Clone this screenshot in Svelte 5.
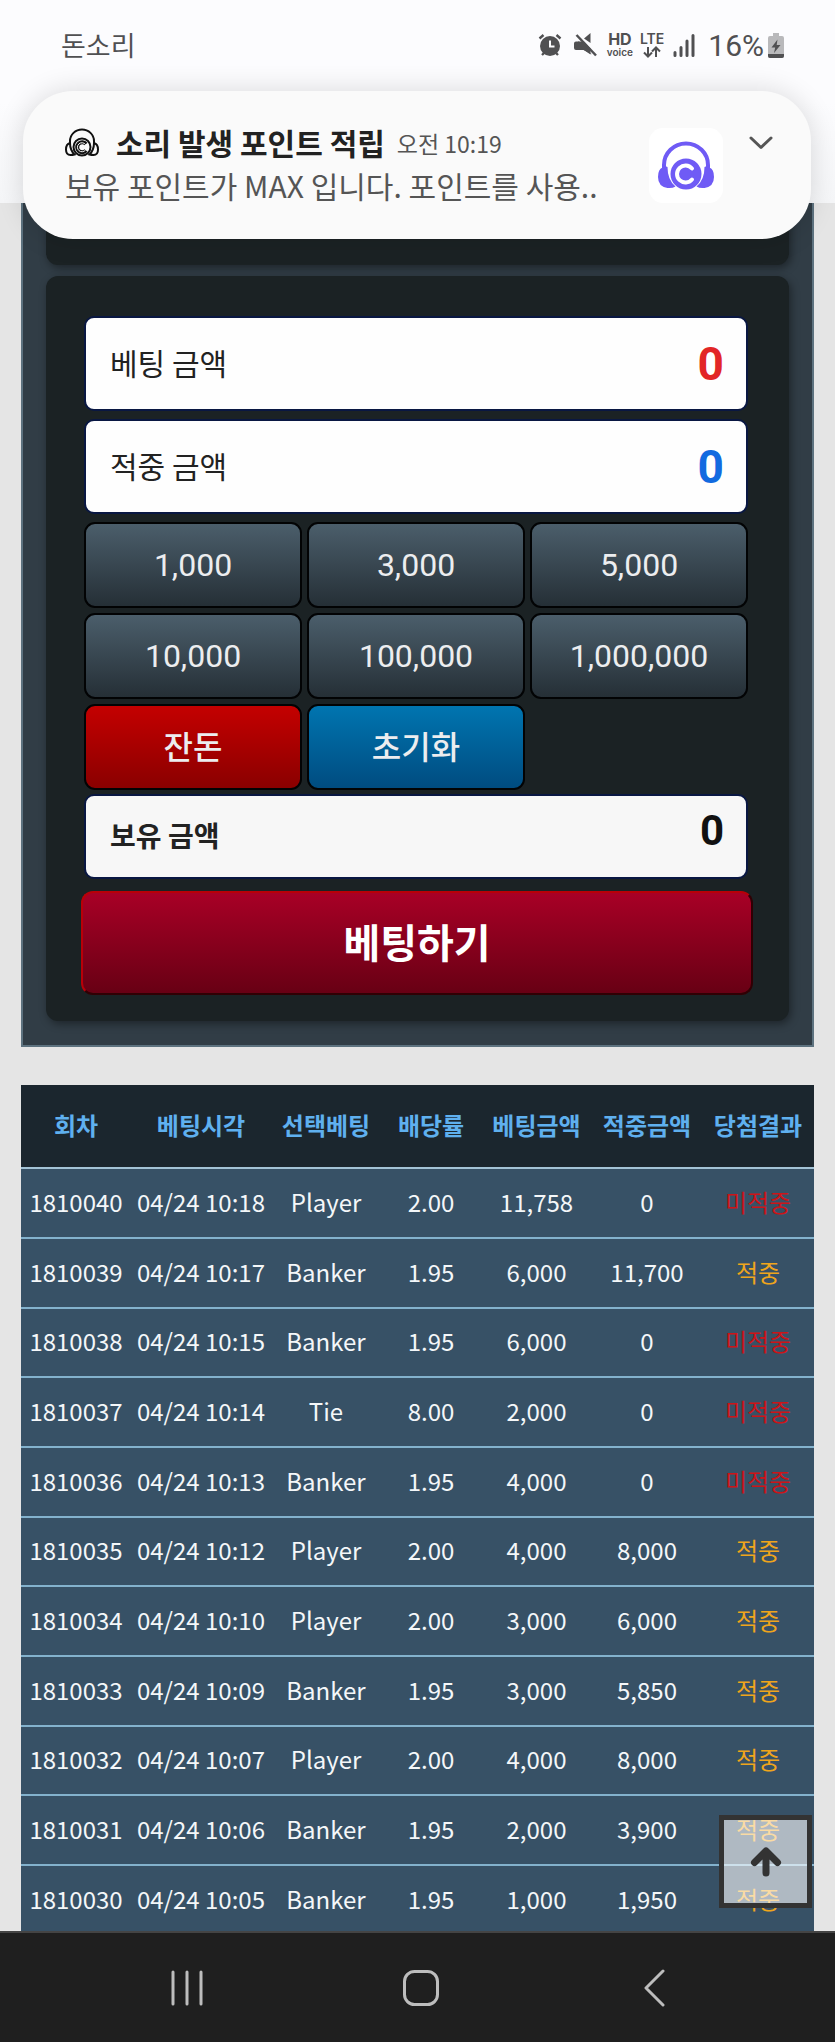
<script lang="ts">
  type Bet = {
    round: number;
    time: string;
    pick: string;
    odds: string;
    stake: number;
    payout: number;
  };

  const columns = ['회차', '베팅시각', '선택베팅', '배당률', '베팅금액', '적중금액', '당첨결과'];

  const bets: Bet[] = [
    { round: 1810040, time: '04/24 10:18', pick: 'Player', odds: '2.00', stake: 11758, payout: 0 },
    { round: 1810039, time: '04/24 10:17', pick: 'Banker', odds: '1.95', stake: 6000, payout: 11700 },
    { round: 1810038, time: '04/24 10:15', pick: 'Banker', odds: '1.95', stake: 6000, payout: 0 },
    { round: 1810037, time: '04/24 10:14', pick: 'Tie', odds: '8.00', stake: 2000, payout: 0 },
    { round: 1810036, time: '04/24 10:13', pick: 'Banker', odds: '1.95', stake: 4000, payout: 0 },
    { round: 1810035, time: '04/24 10:12', pick: 'Player', odds: '2.00', stake: 4000, payout: 8000 },
    { round: 1810034, time: '04/24 10:10', pick: 'Player', odds: '2.00', stake: 3000, payout: 6000 },
    { round: 1810033, time: '04/24 10:09', pick: 'Banker', odds: '1.95', stake: 3000, payout: 5850 },
    { round: 1810032, time: '04/24 10:07', pick: 'Player', odds: '2.00', stake: 4000, payout: 8000 },
    { round: 1810031, time: '04/24 10:06', pick: 'Banker', odds: '1.95', stake: 2000, payout: 3900 },
    { round: 1810030, time: '04/24 10:05', pick: 'Banker', odds: '1.95', stake: 1000, payout: 1950 },
  ];

  const chips = [1000, 3000, 5000, 10000, 100000, 1000000];

  let amount = $state(0);
  let balance = $state(0);
  let odds = $state(0);
  let payout = $derived(Math.floor(amount * odds));

  let historyPane: HTMLElement;

  function format(value: number): string {
    return value.toLocaleString('en-US');
  }

  function placeBet(e: SubmitEvent) {
    e.preventDefault();
    balance = Math.max(0, balance - amount);
    amount = 0;
  }
</script>

<div class="screen">
  <header class="status-bar">
    <span class="carrier">돈소리</span>
    <div class="indicators">
      <svg class="alarm" width="24" height="24" viewBox="0 0 24 24" aria-hidden="true">
        <circle cx="12" cy="13" r="10" />
        <path d="M1.5 5.5 5.5 2M22.5 5.5 18.500 2M4 22l2.500-2.500M20 22l-2.500-2.500" stroke-width="2.400" />
        <path class="hand" d="M12 7.500v6h4.500" stroke-width="2" />
      </svg>
      <svg class="mute" width="24" height="24" viewBox="0 0 24 24" aria-hidden="true">
        <path class="solid" d="M1 10.500Q1 8.500 3 8.500H6L19 21.500 10.500 17H3Q1 17 1 15zM17.500 0v10L11 5.500z" />
        <path class="solid" d="M5 8.500h6l6.500 7v6L9.500 16z" />
        <path d="M3.500 2 23 22.500" stroke-width="2.500" />
      </svg>
      <span class="hd"><b>HD</b><small>voice</small></span>
      <span class="lte">
        LTE
        <svg width="20" height="12" viewBox="0 0 20 12" aria-hidden="true">
          <path d="M6 1v9M2 6.500l4 4 4-4M14 11V2M10 5.500l4-4 4 4" stroke-width="2" />
        </svg>
      </span>
      <svg class="signal" width="24" height="24" viewBox="0 0 24 24" aria-hidden="true">
        <path d="M3 22.500v-3M9 22.500v-8M15 22.500V8M21 22.500v-20" stroke-width="3" stroke-linecap="round" />
      </svg>
      <span class="percent">16%</span>
      <svg width="16" height="25" viewBox="0 0 16 25" aria-hidden="true">
        <path class="cell" d="M5 0h6v3h3q2 0 2 2v18q0 2-2 2H2q-2 0-2-2V5q0-2 2-2h3z" />
        <path class="solid" d="M0 21h16v2q0 2-2 2H2q-2 0-2-2zM9.500 6.500 3.500 14.500H7.200L6 20l6.500-8H8.700z" />
      </svg>
    </div>
  </header>

  <section class="notification">
    <div class="message">
      <div class="message-head">
        <svg class="app-glyph" width="34" height="29" viewBox="0 0 34 29" aria-hidden="true">
          <path d="M5 15V13a12 11.500 0 0 1 24 0v2M5 15q-4 1-4 6.500T5.500 27q2 0 4-.500Q5 22 5 15zM29 15q4 1 4 6.500T28.500 27q-2 0-4-.500Q29 22 29 15z" />
          <circle cx="17" cy="19" r="8.500" />
          <path d="M21 16a5 5 0 1 0 0 6.500" stroke-width="4" />
          <path class="inner" d="M20.500 16.500a4.500 4.500 0 1 0 0 5.500" />
        </svg>
        <strong>소리 발생 포인트 적립</strong>
        <time>오전 10:19</time>
      </div>
      <p>보유 포인트가 MAX 입니다. 포인트를 사용..</p>
    </div>
    <svg class="app-icon" width="74" height="75" viewBox="0 0 74 75" aria-hidden="true">
      <path d="M15 41V37a22 21.500 0 0 1 44 0v4" fill="none" stroke="#6f5bf5" stroke-width="4" />
      <path d="M13.500 37l5 2q0 13 8 19.500-3 2-8 1.500Q9 58.500 9 49q0-8 4.500-9.500zM60.500 37l-5 2q0 13-8 19.500 3 2 8 1.500Q65 58.500 65 49q0-8-4.500-9.500z" fill="#6f5bf5" />
      <circle cx="37" cy="46" r="15.500" fill="#6f5bf5" />
      <path d="M43 40.500a8.500 8.500 0 1 0 0 11" fill="none" stroke="#fff" stroke-width="4" stroke-linecap="round" />
    </svg>
    <button class="expand" type="button" aria-label="알림 펼치기">
      <svg width="24" height="14" viewBox="0 0 24 14" aria-hidden="true">
        <path d="M2 2l10 9.500L22 2" />
      </svg>
    </button>
  </section>

  <main class="content" bind:this={historyPane}>
    <div class="board">
      <div class="block block-tail"></div>

      <form class="block slip" onsubmit={placeBet}>
        <div class="slip-body">
          <div class="field">
            <label for="amount">베팅 금액</label>
            <input id="amount" class="stake" readonly value={format(amount)} />
          </div>
          <div class="field">
            <label for="payout">적중 금액</label>
            <input id="payout" class="win" readonly value={format(payout)} />
          </div>

          <div class="chips">
            {#each chips as chip}
              <button type="button" onclick={() => (amount += chip)}>{format(chip)}</button>
            {/each}
            <button class="red" type="button" onclick={() => (amount = balance)}>잔돈</button>
            <button class="blue" type="button" onclick={() => (amount = 0)}>초기화</button>
          </div>

          <div class="field balance">
            <label for="balance">보유 금액</label>
            <input id="balance" readonly value={format(balance)} />
          </div>
        </div>

        <button class="submit" type="submit">베팅하기</button>
      </form>
    </div>

    <table class="history">
      <colgroup>
        <col class="c-round" />
        <col class="c-time" />
        <col class="c-pick" />
        <col class="c-odds" />
        <col class="c-stake" />
        <col class="c-payout" />
        <col class="c-result" />
      </colgroup>
      <thead>
        <tr>
          {#each columns as column}
            <th scope="col">{column}</th>
          {/each}
        </tr>
      </thead>
      <tbody>
        {#each bets as bet (bet.round)}
          <tr>
            <td>{bet.round}</td>
            <td>{bet.time}</td>
            <td>{bet.pick}</td>
            <td>{bet.odds}</td>
            <td>{format(bet.stake)}</td>
            <td>{format(bet.payout)}</td>
            <td class={bet.payout > 0 ? 'hit' : 'miss'}>{bet.payout > 0 ? '적중' : '미적중'}</td>
          </tr>
        {/each}
      </tbody>
    </table>
  </main>

  <footer class="nav-bar">
    <button class="to-top" type="button" aria-label="맨 위로" onclick={() => historyPane.scrollTo(0, 0)}>
      <svg width="32" height="30" viewBox="0 0 32 30" aria-hidden="true">
        <path d="M16 26V6M4.500 15.500 16 4l11.500 11.500" />
      </svg>
    </button>
    <button type="button" aria-label="최근 앱">
      <svg width="36" height="38" viewBox="0 0 36 38" aria-hidden="true">
        <path d="M4 3v32M18 3v32M32 3v32" />
      </svg>
    </button>
    <button type="button" aria-label="홈">
      <svg width="38" height="38" viewBox="0 0 38 38" aria-hidden="true">
        <rect x="2.500" y="2.500" width="33" height="33" rx="10" />
      </svg>
    </button>
    <button type="button" aria-label="뒤로">
      <svg width="24" height="38" viewBox="0 0 24 38" aria-hidden="true">
        <path d="M20 2 3 19l17 17" />
      </svg>
    </button>
  </footer>
</div>

<style>
  :global(body) {
    background: #e5e5e5;
  }

  .screen {
    --sans: 'Noto Sans CJK KR', 'Noto Sans', sans-serif;
    position: relative;
    display: flex;
    flex-direction: column;
    height: 100vh;
    overflow: hidden;
    font-family: var(--sans);
  }

  button {
    padding: 0;
    font-family: inherit;
    cursor: pointer;
  }

  /* Status bar */
  .status-bar {
    display: flex;
    flex: none;
    align-items: flex-start;
    justify-content: space-between;
    box-sizing: border-box;
    height: 203px;
    padding: 25px 51px 0 61px;
    background: linear-gradient(#fcfcfe 50%, #f5f6f8);
    color: #505052;
  }

  .carrier {
    font-size: 27px;
    line-height: 40px;
  }

  .indicators {
    display: flex;
    align-items: center;
    height: 40px;
    font-family: Inter, sans-serif;
  }

  .indicators svg {
    fill: none;
    stroke: #505052;
  }

  .indicators .solid {
    fill: #505052;
    stroke: none;
  }

  .indicators .cell {
    fill: #b9b9bb;
    stroke: none;
  }

  .alarm circle {
    fill: #505052;
    stroke: none;
  }

  .indicators .hand {
    stroke: #fcfcfe;
  }

  .mute {
    margin-left: 11px;
  }

  .hd,
  .lte {
    display: flex;
    flex-direction: column;
    align-items: center;
    margin-left: 10px;
    line-height: 12px;
  }

  .hd b {
    font-size: 16px;
    line-height: 14px;
  }

  .hd small {
    font-size: 10px;
    font-weight: 600;
    line-height: 12px;
  }

  .lte {
    margin-left: 7px;
    font-size: 14px;
    font-weight: 600;
  }

  .lte svg {
    margin-top: 1px;
  }

  .signal {
    margin-left: 8px;
  }

  .percent {
    margin: 0 4px 0 12px;
    font-family: Roboto, sans-serif;
    font-size: 30px;
  }

  /* Notification */
  .notification {
    position: absolute;
    top: 91px;
    right: 24px;
    left: 23px;
    z-index: 2;
    display: flex;
    align-items: flex-start;
    box-sizing: border-box;
    padding: 37px 38px 36px 42px;
    border-radius: 50px;
    background: #fafafa;
    box-shadow: 0 0 28px rgba(0, 0, 0, 0.14);
  }

  .message {
    flex: 1;
    min-width: 0;
    white-space: nowrap;
  }

  .message-head {
    display: flex;
    align-items: center;
    height: 29px;
  }

  .app-glyph {
    margin-right: 17px;
    fill: none;
    stroke: #111;
    stroke-width: 2;
  }

  .app-glyph .inner {
    stroke: #fafafa;
    stroke-width: 1;
  }

  .message strong {
    color: #222;
    font-size: 30px;
    font-weight: 700;
    line-height: 29px;
  }

  .message time {
    margin-left: 12px;
    color: #555;
    font-size: 23px;
  }

  .message p {
    margin: 10px 0 0;
    color: #555;
    font-size: 30px;
    line-height: 36px;
  }

  .app-icon {
    flex: none;
    border-radius: 14px;
    background: #fff;
  }

  .expand {
    margin: 8px 0 0 26px;
    border: 0;
    background: none;
    line-height: 0;
  }

  .expand path {
    fill: none;
    stroke: #555;
    stroke-width: 3;
    stroke-linecap: round;
    stroke-linejoin: round;
  }

  /* Page content */
  .content {
    flex: 1;
    min-height: 0;
    padding: 0 21px;
    overflow: hidden;
    background: #e5e5e5;
  }

  .board {
    padding: 0 23px 24px;
    border: 2px solid #5d727f;
    border-top: 0;
    background: #313d46;
  }

  .block {
    border-radius: 12px;
    background: #1b2224;
    box-shadow: 2px 3px 8px rgba(0, 0, 0, 0.4);
  }

  .block-tail {
    height: 62px;
    margin-bottom: 11px;
    border-radius: 0 0 12px 12px;
  }

  .slip {
    padding: 40px 36px 26px 35px;
  }

  .slip-body {
    display: flex;
    flex-direction: column;
    padding: 0 5px 0 3px;
  }

  .field {
    display: flex;
    align-items: center;
    box-sizing: border-box;
    height: 95px;
    margin-bottom: 8px;
    padding: 0 22px 0 24px;
    border: 2px solid #091742;
    border-radius: 10px;
    background: #fefefe;
    color: #222;
  }

  .field label {
    flex: none;
    padding-bottom: 4px;
    font-size: 30px;
  }

  .field input {
    flex: 1;
    min-width: 0;
    padding: 0;
    border: 0;
    outline: 0;
    background: none;
    color: #111;
    font-family: Roboto, sans-serif;
    font-size: 46px;
    font-weight: 700;
    text-align: right;
  }

  .field .stake {
    color: #e22626;
  }

  .field .win {
    color: #126ae0;
  }

  .chips {
    display: grid;
    grid-template-columns: repeat(3, 1fr);
    gap: 5px;
  }

  .chips button {
    height: 86px;
    border: 2px solid #020304;
    border-radius: 11px;
    background: linear-gradient(#4b5e6b, #252f36);
    color: #ecedef;
    font-family: Roboto, 'Noto Sans CJK KR', sans-serif;
    font-size: 32px;
  }

  .chips .red,
  .chips .blue {
    padding-bottom: 4px;
    font-weight: 500;
  }

  .chips .red {
    background: linear-gradient(#c40000, #8a0000);
  }

  .chips .blue {
    background: linear-gradient(#0075b0, #004c80);
  }

  .balance {
    height: 85px;
    margin: 4px 0 12px;
    background: #f7f7f7;
  }

  .balance label {
    font-size: 28px;
    font-weight: 700;
  }

  .balance input {
    padding-bottom: 12px;
    font-size: 42px;
  }

  .submit {
    display: block;
    width: 100%;
    height: 104px;
    padding-bottom: 4px;
    border: 2px solid;
    border-color: #b80008 #300004 #300004 #b80008;
    border-radius: 12px;
    background: linear-gradient(#a80026, #680014);
    color: #fff;
    font-size: 40px;
    font-weight: 700;
  }

  /* Bet history */
  .history {
    width: 100%;
    margin-top: 38px;
    border-collapse: separate;
    border-spacing: 0;
    table-layout: fixed;
    background: #375166;
    color: #f4f7f9;
    font-size: 24px;
    text-align: center;
    white-space: nowrap;
  }

  .c-round {
    width: 110px;
  }

  .c-time {
    width: 140px;
  }

  .c-pick {
    width: 110px;
  }

  .c-odds {
    width: 100px;
  }

  .c-stake {
    width: 111px;
  }

  .c-payout {
    width: 110px;
  }

  .c-result {
    width: 112px;
  }

  .history th,
  .history td {
    box-sizing: border-box;
    height: 70px;
    padding: 0 0 3px;
    border-bottom: 2px solid #83b2cd;
    line-height: 32px;
  }

  .history tr:nth-child(3n) td {
    height: 69px;
  }

  .history th {
    height: 84px;
    border-bottom-color: #a3c3d6;
    background: #1b262e;
    color: #5fb0ef;
    font-weight: 700;
  }

  .history .hit {
    color: #efa51c;
  }

  .history .miss {
    color: #cc1418;
  }

  /* Navigation bar */
  .nav-bar {
    position: relative;
    display: flex;
    flex: none;
    align-items: center;
    justify-content: space-between;
    box-sizing: border-box;
    height: 111px;
    padding: 0 150px 0 157px;
    border-top: 2px solid #444;
    background: #1f1f1f;
  }

  .nav-bar button {
    width: 60px;
    border: 0;
    background: none;
    line-height: 0;
  }

  .nav-bar svg {
    fill: none;
    stroke: #bdbdbd;
    stroke-width: 3;
    stroke-linecap: round;
    stroke-linejoin: round;
  }

  .nav-bar .to-top {
    position: absolute;
    right: 23px;
    bottom: 100%;
    display: grid;
    place-items: center;
    box-sizing: border-box;
    width: 93px;
    height: 93px;
    margin-bottom: 25px;
    border: 5px solid #333;
    background: rgba(255, 255, 255, 0.6);
  }

  .nav-bar .to-top svg {
    stroke: #333;
    stroke-width: 7;
  }
</style>
